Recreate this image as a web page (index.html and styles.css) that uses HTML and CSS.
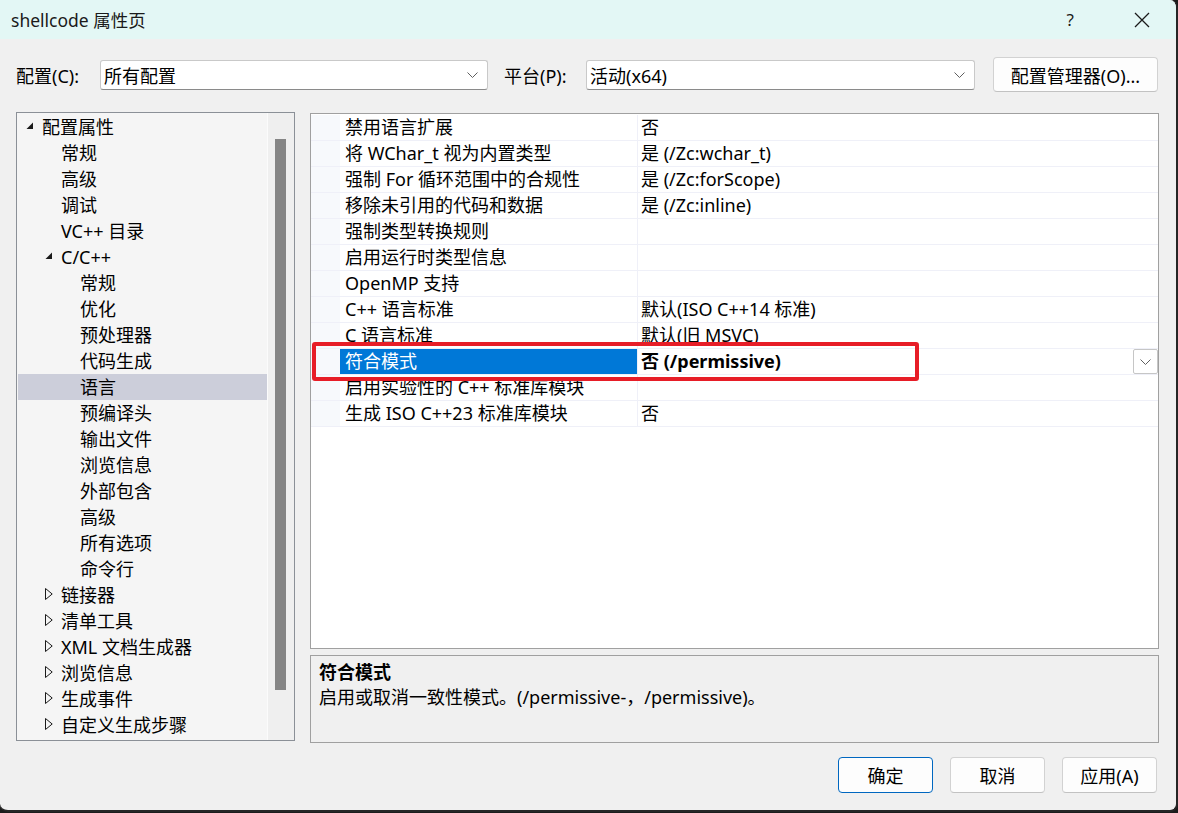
FILE: index.html
```html
<!DOCTYPE html>
<html lang="zh-CN">
<head>
<meta charset="utf-8">
<title>shellcode 属性页</title>
<link rel="stylesheet" href="styles.css">
</head>
<body>
<div class="window">
  <div class="titlebar">
    <div class="title">shellcode 属性页</div>
    <div class="title-controls">
      <span class="help">?</span>
      <svg class="close" width="16" height="16" viewBox="0 0 16 16"><path d="M1 1 L15 15 M15 1 L1 15" stroke="#1a1a1a" stroke-width="1.3" fill="none"/></svg>
    </div>
  </div>

  <div class="config-row">
    <label class="cfg-label">配置(C):</label>
    <div class="combo combo-config">
      <span>所有配置</span>
      <svg class="chev" width="11" height="6" viewBox="0 0 11 6"><path d="M0.5 0.5 L5.5 5.5 L10.5 0.5" stroke="#5f5f5f" stroke-width="1" fill="none"/></svg>
    </div>
    <label class="cfg-label plat-label">平台(P):</label>
    <div class="combo combo-plat">
      <span>活动(x64)</span>
      <svg class="chev" width="11" height="6" viewBox="0 0 11 6"><path d="M0.5 0.5 L5.5 5.5 L10.5 0.5" stroke="#5f5f5f" stroke-width="1" fill="none"/></svg>
    </div>
    <button class="btn btn-mgr">配置管理器(O)...</button>
  </div>

  <div class="main">
    <div class="tree">
      <div class="tree-list">
        <div class="node l0"><span class="arrow"><svg width="8" height="8" viewBox="0 0 8 8"><polygon points="7,0.5 7,7 0.5,7" fill="#1a1a1a"/></svg></span>配置属性</div>
        <div class="node l1"><span class="arrow"></span>常规</div>
        <div class="node l1"><span class="arrow"></span>高级</div>
        <div class="node l1"><span class="arrow"></span>调试</div>
        <div class="node l1"><span class="arrow"></span>VC++ 目录</div>
        <div class="node l1"><span class="arrow"><svg width="8" height="8" viewBox="0 0 8 8"><polygon points="7,0.5 7,7 0.5,7" fill="#1a1a1a"/></svg></span>C/C++</div>
        <div class="node l2"><span class="arrow"></span>常规</div>
        <div class="node l2"><span class="arrow"></span>优化</div>
        <div class="node l2"><span class="arrow"></span>预处理器</div>
        <div class="node l2"><span class="arrow"></span>代码生成</div>
        <div class="node l2 selected"><span class="arrow"></span>语言</div>
        <div class="node l2"><span class="arrow"></span>预编译头</div>
        <div class="node l2"><span class="arrow"></span>输出文件</div>
        <div class="node l2"><span class="arrow"></span>浏览信息</div>
        <div class="node l2"><span class="arrow"></span>外部包含</div>
        <div class="node l2"><span class="arrow"></span>高级</div>
        <div class="node l2"><span class="arrow"></span>所有选项</div>
        <div class="node l2"><span class="arrow"></span>命令行</div>
        <div class="node l1"><span class="arrow"><svg class="tri" width="8" height="12" viewBox="0 0 8 12"><polygon points="0.5,0.5 7.2,6 0.5,11.5" fill="none" stroke="#1a1a1a" stroke-width="1"/></svg></span>链接器</div>
        <div class="node l1"><span class="arrow"><svg class="tri" width="8" height="12" viewBox="0 0 8 12"><polygon points="0.5,0.5 7.2,6 0.5,11.5" fill="none" stroke="#1a1a1a" stroke-width="1"/></svg></span>清单工具</div>
        <div class="node l1"><span class="arrow"><svg class="tri" width="8" height="12" viewBox="0 0 8 12"><polygon points="0.5,0.5 7.2,6 0.5,11.5" fill="none" stroke="#1a1a1a" stroke-width="1"/></svg></span>XML 文档生成器</div>
        <div class="node l1"><span class="arrow"><svg class="tri" width="8" height="12" viewBox="0 0 8 12"><polygon points="0.5,0.5 7.2,6 0.5,11.5" fill="none" stroke="#1a1a1a" stroke-width="1"/></svg></span>浏览信息</div>
        <div class="node l1"><span class="arrow"><svg class="tri" width="8" height="12" viewBox="0 0 8 12"><polygon points="0.5,0.5 7.2,6 0.5,11.5" fill="none" stroke="#1a1a1a" stroke-width="1"/></svg></span>生成事件</div>
        <div class="node l1"><span class="arrow"><svg class="tri" width="8" height="12" viewBox="0 0 8 12"><polygon points="0.5,0.5 7.2,6 0.5,11.5" fill="none" stroke="#1a1a1a" stroke-width="1"/></svg></span>自定义生成步骤</div>
      </div>
      <div class="vscroll"><div class="thumb"></div></div>
    </div>

    <div class="right">
      <div class="grid">
        <div class="row"><div class="gut"></div><div class="name">禁用语言扩展</div><div class="val">否</div></div>
        <div class="row"><div class="gut"></div><div class="name">将 WChar_t 视为内置类型</div><div class="val">是 (/Zc:wchar_t)</div></div>
        <div class="row"><div class="gut"></div><div class="name">强制 For 循环范围中的合规性</div><div class="val">是 (/Zc:forScope)</div></div>
        <div class="row"><div class="gut"></div><div class="name">移除未引用的代码和数据</div><div class="val">是 (/Zc:inline)</div></div>
        <div class="row"><div class="gut"></div><div class="name">强制类型转换规则</div><div class="val"></div></div>
        <div class="row"><div class="gut"></div><div class="name">启用运行时类型信息</div><div class="val"></div></div>
        <div class="row"><div class="gut"></div><div class="name">OpenMP 支持</div><div class="val"></div></div>
        <div class="row"><div class="gut"></div><div class="name">C++ 语言标准</div><div class="val">默认(ISO C++14 标准)</div></div>
        <div class="row"><div class="gut"></div><div class="name">C 语言标准</div><div class="val">默认(旧 MSVC)</div></div>
        <div class="row active"><div class="gut"></div><div class="name">符合模式</div><div class="val"><b>否 (/permissive)</b>
          <span class="dd"><svg width="11" height="6" viewBox="0 0 11 6"><path d="M0.5 0.5 L5.5 5.5 L10.5 0.5" stroke="#5f5f5f" stroke-width="1" fill="none"/></svg></span></div></div>
        <div class="row"><div class="gut"></div><div class="name">启用实验性的 C++ 标准库模块</div><div class="val"></div></div>
        <div class="row"><div class="gut"></div><div class="name">生成 ISO C++23 标准库模块</div><div class="val">否</div></div>
        <div class="highlight"></div>
      </div>
      <div class="desc">
        <div class="desc-title">符合模式</div>
        <div class="desc-text">启用或取消一致性模式。(/permissive-，/permissive)。</div>
      </div>
    </div>
  </div>

  <div class="footer">
    <button class="btn btn-ok">确定</button>
    <button class="btn">取消</button>
    <button class="btn">应用(A)</button>
  </div>
</div>
</body>
</html>
```

FILE: styles.css
```css
* { box-sizing: border-box; }
html, body { margin: 0; padding: 0; }
body {
  background: #1c1c1c;
  width: 1178px;
  height: 813px;
  overflow: hidden;
  font-family: "Noto Sans", "Noto Sans CJK SC", sans-serif;
  font-size: 18px;
  color: #000;
}
.window {
  width: 1178px;
  height: 812px;
  background: #f0f0f0;
  border-right: 2px solid #262626;
  border-bottom: 2px solid #262626;
  border-radius: 0 8px 8px 8px;
  overflow: hidden;
  display: flex;
  flex-direction: column;
}
.titlebar {
  height: 39px;
  background: #e3f7f5;
  display: flex;
  align-items: center;
  justify-content: space-between;
  padding-left: 11px;
  flex-shrink: 0;
}
.title { font-size: 17.5px; color: #1a1a1a; }
.title-controls { display: flex; align-items: center; }
.help { font-size: 17px; color: #1a1a1a; margin-right: 60px; }
.close { margin-right: 26px; }

.config-row {
  margin-top: 18px;
  height: 35px;
  display: flex;
  align-items: center;
  padding-left: 16px;
  flex-shrink: 0;
}
.cfg-label { width: 84px; }
.plat-label { margin-left: 16px; width: 82px; }
.combo {
  height: 30px;
  background: #fff;
  border: 1px solid #c9c9c9;
  border-bottom-color: #8a8a8a;
  border-radius: 3px;
  display: flex;
  align-items: center;
  justify-content: space-between;
  padding: 0 9px 0 3px;
}
.combo-config { width: 388px; }
.combo-plat { width: 389px; }
.chev { margin-top: 1px; }

.btn {
  font-family: inherit;
  font-size: 18px;
  color: #000;
  background: #fdfdfd;
  border: 1px solid #d2d2d2;
  border-bottom-color: #c2c2c2;
  border-radius: 4px;
  height: 36px;
  width: 95px;
  padding: 0;
}
.btn-mgr { margin-left: 18px; width: 165px; height: 35px; }

.main {
  margin-top: 20px;
  display: flex;
  padding-left: 16px;
  flex-shrink: 0;
}
.tree {
  width: 279px;
  height: 629px;
  border: 1px solid #8b9097;
  background: #f5f5f5;
  display: flex;
}
.tree-list {
  width: 251px;
  padding: 1px 0 0 1px;
  border-right: 1px solid #fbfbfb;
}
.node {
  height: 26px;
  line-height: 26px;
  display: flex;
  align-items: center;
  white-space: nowrap;
}
.node .arrow {
  width: 16px;
  height: 26px;
  display: flex;
  align-items: center;
  flex-shrink: 0;
}
.node.l0 { padding-left: 8px; }
.node.l1 { padding-left: 27px; }
.node.l2 { padding-left: 46px; }
.node.l0 .arrow svg { margin-top: -3px; }
.node.l1 .arrow svg { margin-left: 0; margin-top: -2px; }
.node .arrow .tri { margin-left: 1px; margin-top: 0; }
.node.selected { background: #ccceda; }

.vscroll {
  flex: 1;
  background: #efefef;
  position: relative;
}
.thumb {
  margin: 26px 0 0 7px;
  width: 11px;
  height: 551px;
  background: #858585;
}

.right {
  margin-left: 15px;
  width: 849px;
  display: flex;
  flex-direction: column;
}
.grid {
  position: relative;
  margin-top: 1px;
  height: 536px;
  background: #fff;
  border: 1px solid #a0a0a0;
  padding-top: 1px;
}
.row {
  height: 26px;
  display: flex;
  border-bottom: 1px solid #eff0f8;
}
.row .gut {
  width: 29px;
  background: #f7f9fc;
  flex-shrink: 0;
}
.row .name {
  width: 298px;
  padding-left: 5px;
  line-height: 25px;
  border-right: 1px solid #eff0f8;
  white-space: nowrap;
  flex-shrink: 0;
}
.row .val {
  flex: 1;
  padding-left: 3px;
  line-height: 25px;
  white-space: nowrap;
  position: relative;
}
.row.active .name { background: #0078d7; color: #fff; }
.row.active .val b { font-weight: 700; }
.dd {
  position: absolute;
  right: 0;
  top: 0;
  width: 25px;
  height: 25px;
  border: 1px solid #c6c6c6;
  border-radius: 2px;
  background: #fff;
  display: flex;
  align-items: center;
  justify-content: center;
}
.highlight {
  position: absolute;
  left: 1px;
  top: 228px;
  width: 607px;
  height: 39px;
  border: 4px solid #e71d27;
  border-radius: 3px;
  pointer-events: none;
}
.desc {
  margin-top: 6px;
  height: 88px;
  border: 1px solid #a0a0a0;
  background: #f0f0f0;
  padding: 4px 0 0 8px;
}
.desc-title { font-weight: 700; line-height: 25px; }
.desc-text { line-height: 25px; }

.footer {
  margin-top: 14px;
  display: flex;
  justify-content: flex-end;
  gap: 17px;
  padding-right: 19px;
}
.btn-ok { border: 1px solid #0067c0; }
```
